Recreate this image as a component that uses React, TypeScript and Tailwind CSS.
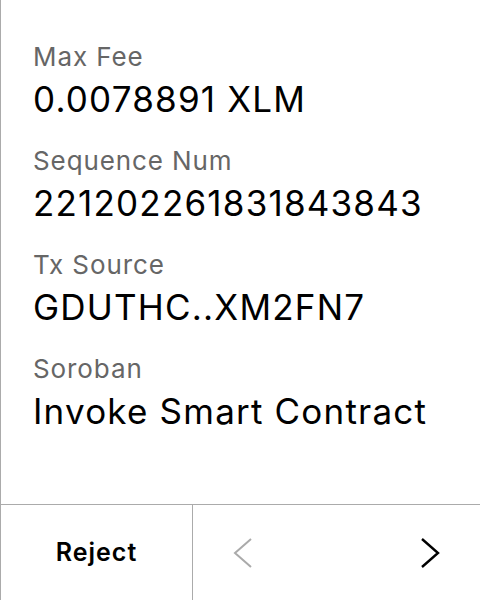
const rows = [
  { label: "Max Fee", value: "0.0078891 XLM" },
  { label: "Sequence Num", value: "221202261831843843" },
  { label: "Tx Source", value: "GDUTHC..XM2FN7" },
  { label: "Soroban", value: "Invoke Smart Contract" },
];

export default function App() {
  return (
    <div
      className="flex h-[600px] w-[480px] flex-col border-l border-[#ababab] bg-white text-black"
      style={{ fontFamily: "Inter, 'Liberation Sans', sans-serif" }}
    >
      {/* Transaction details */}
      <div className="flex flex-1 flex-col gap-[20px] pl-[32px] pt-[42px]">
        {rows.map((row) => (
          <div key={row.label} className="flex flex-col">
            <span className="text-[26px] leading-[30px] tracking-[0.9px] text-[#666666]">{row.label}</span>
            <span className="text-[35px] leading-[54px] tracking-[1.2px]">{row.value}</span>
          </div>
        ))}
      </div>

      {/* Footer actions */}
      <div className="flex h-[96px] border-t border-[#ababab]">
        <button className="flex w-[192px] items-center justify-center border-r border-[#ababab] text-[25px] font-semibold tracking-[1px]">
          Reject
        </button>
        <div className="flex flex-1 items-center justify-between px-[40px]">
          <svg width="20" height="32" viewBox="0 0 20 32" fill="none">
            <polyline points="18,2 2,16 18,30" stroke="#aaaaaa" strokeWidth="2" />
          </svg>
          <svg width="20" height="32" viewBox="0 0 20 32" fill="none">
            <polyline points="2,2 18,16 2,30" stroke="#000000" strokeWidth="2.4" />
          </svg>
        </div>
      </div>
    </div>
  );
}
